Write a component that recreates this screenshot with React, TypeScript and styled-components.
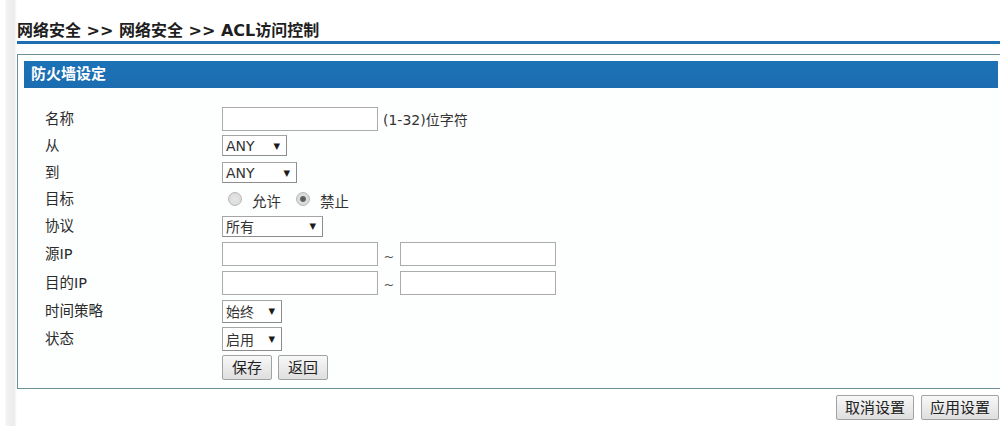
import React, {FC} from 'react';
import styled, {createGlobalStyle} from "styled-components";


const GlobalStyle = createGlobalStyle`
  html, body {
    margin: 0;
    overflow: hidden;
    background: linear-gradient(to right, #fff 5px, #f3f3f3 6px, #ebebeb 14px, #fff 17px);
    font-family: "DejaVu Sans", "Noto Sans CJK SC", sans-serif;
    color: #333;
  }
`

const Page = styled.div`
  width: 983px;
  padding-left: 17px;
  padding-top: 21px;
`

const Heading = styled.div`
  font-size: 16px;
  font-weight: bold;
  line-height: 20px;
  color: #1e1e1e;
  border-bottom: 3px solid #1f6eb2;
`

const Panel = styled.div`
  margin-top: 10px;
  margin-right: -5px;
  border: 1px solid #6d8f97;
  padding: 6px;
  background: #fdfefe;
`

const PanelHeader = styled.div`
  height: 27px;
  line-height: 27px;
  padding-left: 7px;
  background: linear-gradient(#1c72b6, #1b6db0);
  color: #fff;
  font-size: 15px;
  font-weight: bold;
`

const Form = styled.div`
  padding: 17px 0 0 21px;
  display: flex;
  flex-direction: column;
`

const Row = styled.div<{ $h: number }>`
  display: flex;
  align-items: center;
  height: ${p => p.$h}px;
`

const Label = styled.div`
  width: 177px;
  font-size: 14.5px;
  line-height: 18px;
  color: #2b2b2b;
`

const Controls = styled.div`
  display: flex;
  align-items: center;
`

const TextInput = styled.input`
  box-sizing: border-box;
  width: 156px;
  height: 24px;
  border: 1px solid #ababab;
  background: #fff;
  padding: 0 3px;
  margin: 0;
  font: inherit;
`

const Hint = styled.span`
  margin-left: 5px;
  font-size: 14px;
  color: #333;
`

const Tilde = styled.span`
  width: 22px;
  text-align: center;
  font-size: 13px;
  color: #555;
  padding-top: 4px;
`

const SelectBox = styled.div<{ $w: number, $h: number }>`
  box-sizing: border-box;
  width: ${p => p.$w}px;
  height: ${p => p.$h}px;
  display: flex;
  align-items: center;
  justify-content: space-between;
  padding: 0 6px 0 3px;
  border: 1px solid #a5a5a5;
  border-right-color: #8c8c8c;
  border-bottom-color: #8c8c8c;
  background: #fff;
  font-size: 14px;
  color: #333;
`

const Arrow = styled.span`
  font-size: 8.5px;
  color: #1a1a1a;
`

const Radio = styled.span<{ $checked?: boolean }>`
  box-sizing: border-box;
  width: 14px;
  height: 14px;
  border-radius: 50%;
  border: 1px solid #b9b9b9;
  background: radial-gradient(circle, ${p => p.$checked ? '#555 0, #666 2.5px, #dcdcdc 3.5px' : '#e6e6e6 0'}, #d6d6d6 100%);
  display: inline-block;
`

const RadioText = styled.span`
  font-size: 14.5px;
  color: #333;
  margin: 2px 15px 0 10px;
`

const RadioGroup = styled.div`
  display: flex;
  align-items: center;
  padding-left: 6px;
`

const Button = styled.button`
  box-sizing: border-box;
  height: 25px;
  padding: 0 9px;
  margin: 0 6px 0 0;
  border: 1px solid #a2a2a2;
  border-radius: 2px;
  background: linear-gradient(#f8f8f8, #dedede);
  font-family: inherit;
  font-size: 15px;
  color: #222;
  line-height: 22px;
`

const Footer = styled.div`
  display: flex;
  justify-content: flex-end;
  padding: 6px 1px 0 0;
`

const FooterButton = styled(Button)`
  padding: 0 8px;
  margin: 0 0 0 7px;
`

interface SelectProps {
  value: string
  w: number
  h?: number
}

const Select: FC<SelectProps> = ({value, w, h = 21}) =>
  <SelectBox $w={w} $h={h}>
    <span>{value}</span>
    <Arrow>▼</Arrow>
  </SelectBox>

const App: FC = () =>
  <Page>
    <GlobalStyle/>
    <Heading>网络安全 &gt;&gt; 网络安全 &gt;&gt; ACL访问控制</Heading>
    <Panel>
      <PanelHeader>防火墙设定</PanelHeader>
      <Form>
        <Row $h={27}>
          <Label>名称</Label>
          <Controls>
            <TextInput/>
            <Hint>(1-32)位字符</Hint>
          </Controls>
        </Row>
        <Row $h={27}>
          <Label>从</Label>
          <Select value="ANY" w={65}/>
        </Row>
        <Row $h={27}>
          <Label>到</Label>
          <Select value="ANY" w={75}/>
        </Row>
        <Row $h={26}>
          <Label>目标</Label>
          <RadioGroup>
            <Radio/>
            <RadioText>允许</RadioText>
            <Radio $checked/>
            <RadioText>禁止</RadioText>
          </RadioGroup>
        </Row>
        <Row $h={28}>
          <Label>协议</Label>
          <Select value="所有" w={101}/>
        </Row>
        <Row $h={28}>
          <Label>源IP</Label>
          <Controls>
            <TextInput/>
            <Tilde>~</Tilde>
            <TextInput/>
          </Controls>
        </Row>
        <Row $h={29}>
          <Label>目的IP</Label>
          <Controls>
            <TextInput/>
            <Tilde>~</Tilde>
            <TextInput/>
          </Controls>
        </Row>
        <Row $h={28}>
          <Label>时间策略</Label>
          <Select value="始终" w={60} h={23}/>
        </Row>
        <Row $h={28}>
          <Label>状态</Label>
          <Select value="启用" w={60} h={24}/>
        </Row>
        <Row $h={29}>
          <Label/>
          <Controls>
            <Button>保存</Button>
            <Button>返回</Button>
          </Controls>
        </Row>
      </Form>
    </Panel>
    <Footer>
      <FooterButton>取消设置</FooterButton>
      <FooterButton>应用设置</FooterButton>
    </Footer>
  </Page>


export default App
